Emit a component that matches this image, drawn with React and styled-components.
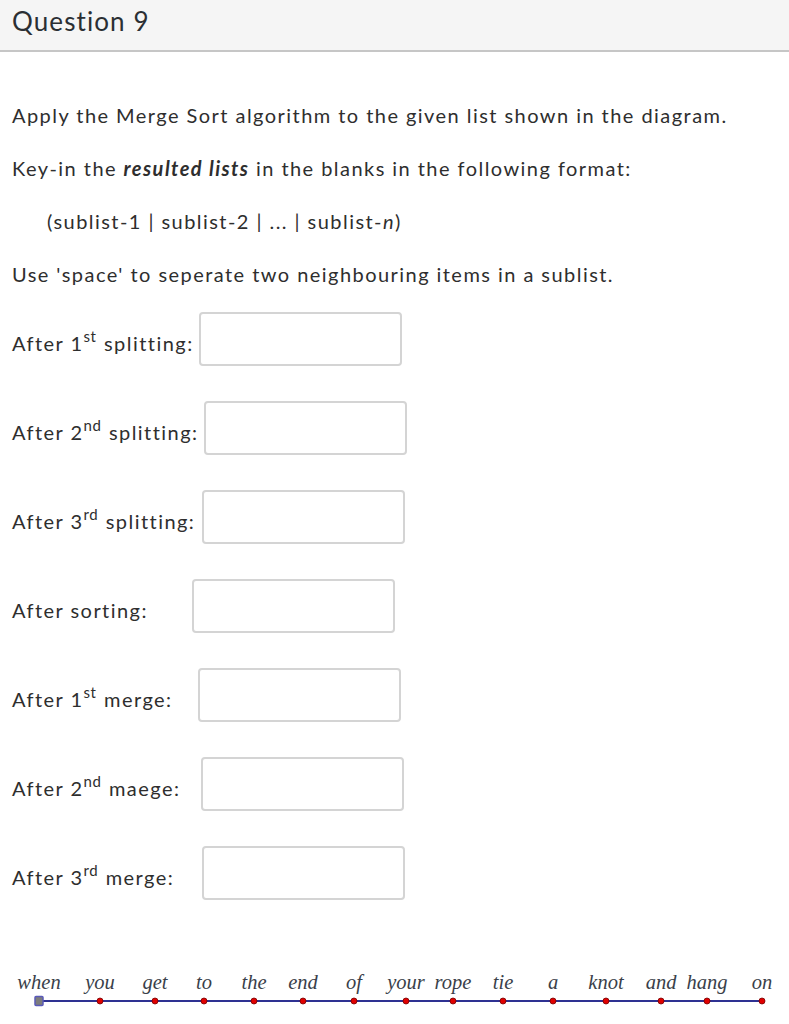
import styled, { createGlobalStyle } from "styled-components";

const GlobalStyle = createGlobalStyle`
    body {
        margin: 0;
        background: #ffffff;
        font-family: Lato, "Open Sans", sans-serif;
        color: #2e2e2e;
    }
`;

const Header = styled.div`
    height: 52px;
    background: #f5f5f5;
    border-bottom: 2px solid #c6c6c6;
    padding: 4px 0 0 12px;
    box-sizing: border-box;
`;

const Title = styled.h3`
    margin: 0;
    font-size: 26px;
    line-height: 34px;
    font-weight: 400;
    letter-spacing: 1.1px;
    color: #2b2f33;
`;

const Content = styled.div`
    padding: 48px 12px 0 12px;
`;

const Para = styled.p`
    margin: 0 0 23px;
    font-size: 20px;
    line-height: 30px;
    letter-spacing: 1.45px;
    padding-left: ${(p) => (p.indent ? "35px" : "0")};
`;

const Row = styled.div`
    display: flex;
    align-items: center;
    height: 54px;
    margin-bottom: 35px;
`;

const Label = styled.label`
    width: ${(p) => p.width}px;
    flex-shrink: 0;
    font-size: 20px;
    letter-spacing: 1.45px;
    padding-top: 8px;
    white-space: nowrap;

    sup {
        font-size: 15px;
        line-height: 0;
        letter-spacing: 0.5px;
        vertical-align: 9px;
        margin-right: 1px;
    }
`;

const Blank = styled.input`
    width: 203px;
    height: 54px;
    box-sizing: border-box;
    border: 2px solid #d4d4d4;
    border-radius: 4px;
    background: #fff;
`;

const Figure = styled.div`
    margin-top: 65px;
`;

const rows = [
    { n: "1", sup: "st", word: "splitting:", width: 187 },
    { n: "2", sup: "nd", word: "splitting:", width: 192 },
    { n: "3", sup: "rd", word: "splitting:", width: 190 },
    { n: null, word: "sorting:", width: 180 },
    { n: "1", sup: "st", word: "merge:", width: 186 },
    { n: "2", sup: "nd", word: "maege:", width: 189 },
    { n: "3", sup: "rd", word: "merge:", width: 190 },
];

const words = [
    ["when", 39], ["you", 100], ["get", 155], ["to", 204], ["the", 254],
    ["end", 303], ["of", 354], ["your", 406], ["rope", 453], ["tie", 503],
    ["a", 553], ["knot", 606], ["and", 661], ["hang", 707], ["on", 762],
];

const Diagram = () => (
    <svg width="789" height="48" viewBox="0 0 789 48">
        {words.map(([w, x]) => (
            <text key={w + x} x={x} y="24" textAnchor="middle"
                fontFamily="'Liberation Serif', serif" fontStyle="italic"
                fontSize="20.5" fill="#3a3f4a">{w}</text>
        ))}
        <line x1="39" y1="36" x2="762" y2="36" stroke="#2e3192" strokeWidth="2" />
        {words.slice(1).map(([w, x]) => (
            <circle key={w} cx={x} cy="36" r="3" fill="#e00000" stroke="#700" strokeWidth="0.8" />
        ))}
        <rect x="35" y="31.5" width="8" height="9" rx="1" fill="#7d7d7d" stroke="#5a5ab8" strokeWidth="1.5" />
    </svg>
);

const App = () => {
    return (
        <>
            <GlobalStyle />
            <Header>
                <Title>Question 9</Title>
            </Header>
            <Content>
                <Para>Apply the Merge Sort algorithm to the given list shown in the diagram.</Para>
                <Para>Key-in the <b><i>resulted lists</i></b> in the blanks in the following format:</Para>
                <Para indent>(sublist-1 | sublist-2 | ... | sublist-<i>n</i>)</Para>
                <Para>Use 'space' to seperate two neighbouring items in a sublist.</Para>
                {rows.map((r, i) => (
                    <Row key={i}>
                        <Label width={r.width}>
                            After {r.n && <>{r.n}<sup>{r.sup}</sup></>} {r.word}
                        </Label>
                        <Blank type="text" />
                    </Row>
                ))}
            </Content>
            <Figure>
                <Diagram />
            </Figure>
        </>
    );
};

export default App;
